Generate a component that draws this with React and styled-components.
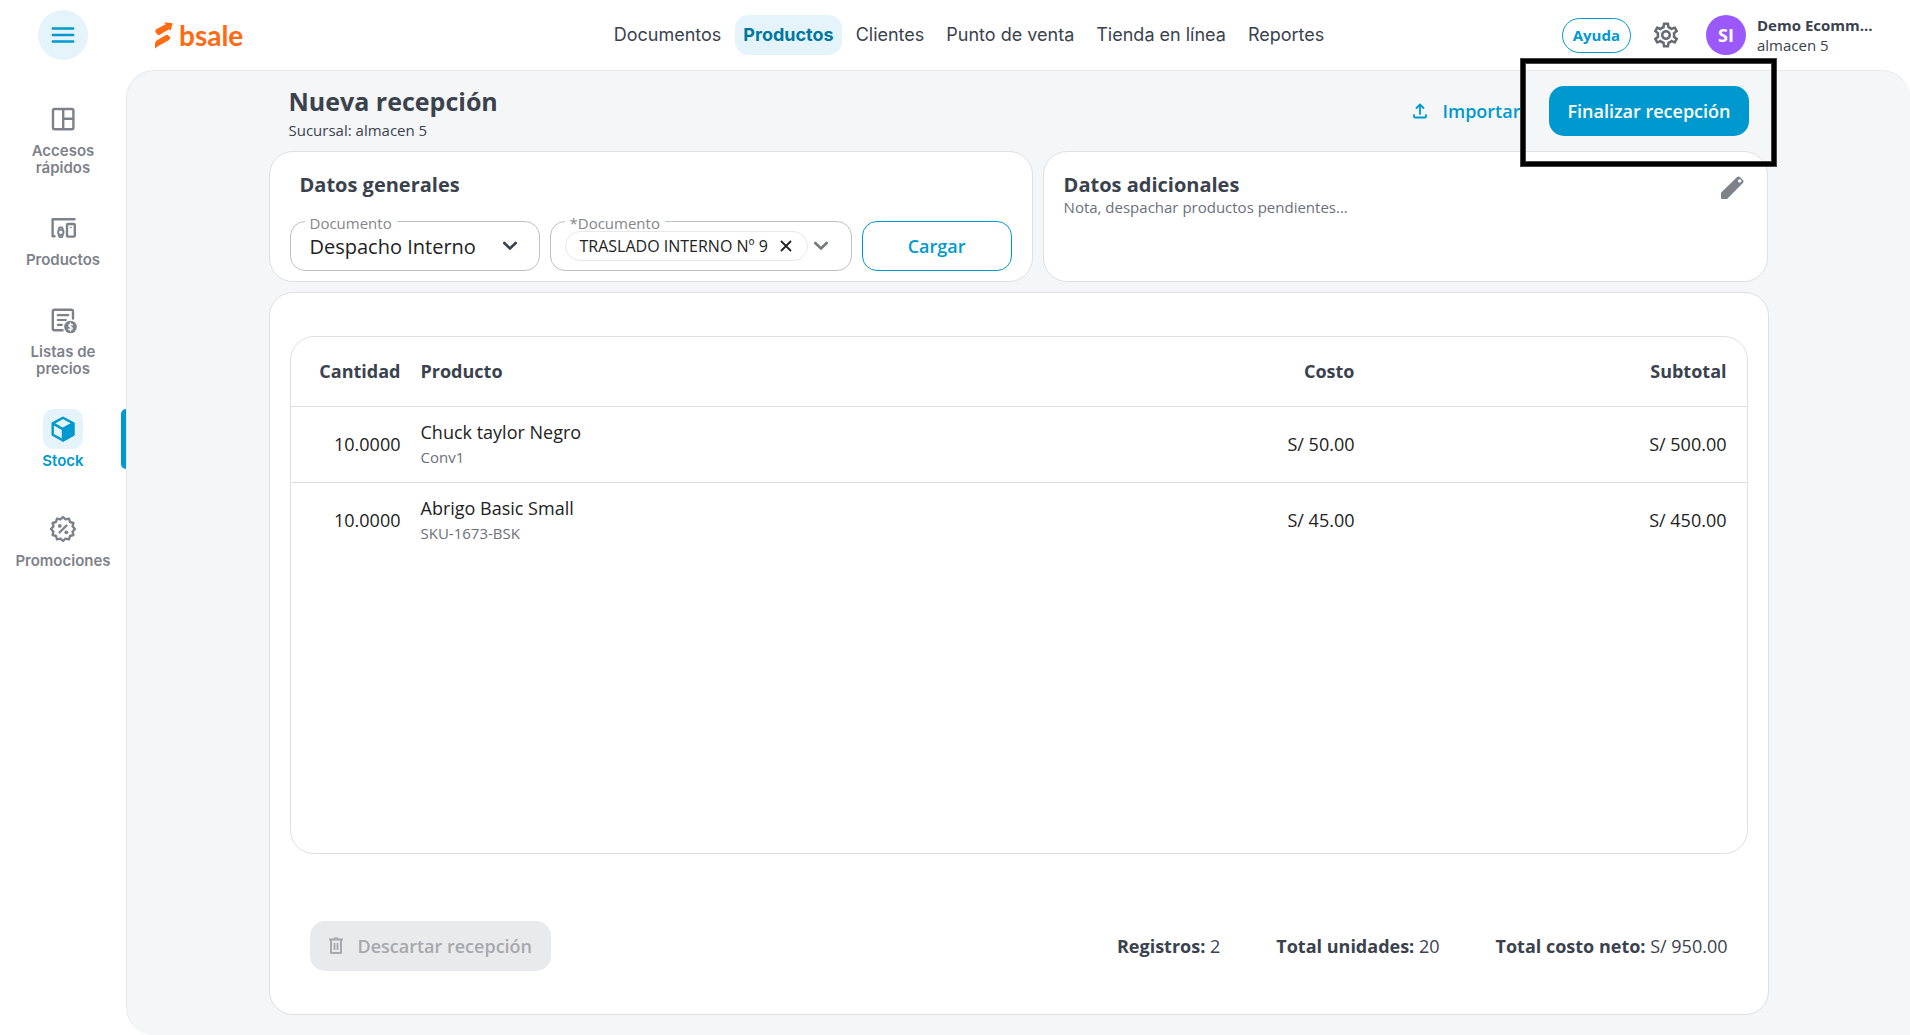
import React from 'react';
import styled, { createGlobalStyle, css } from 'styled-components';
import { MdOutlineSettings } from 'react-icons/md';

const c = {
  blue: '#0099cf',
  blueDark: '#00779f',
  blueSoft: '#e5f4fa',
  ink: '#3a424e',
  text: '#222222',
  muted: '#6b717b',
  grey: '#7d828a',
  line: '#dfe0e2',
  page: '#f5f6f8',
};

const GlobalStyle = createGlobalStyle`
  *, *::before, *::after { box-sizing: border-box; }
  body {
    margin: 0;
    background: #fff;
    color: ${c.ink};
    font-family: 'Open Sans', 'Noto Sans', sans-serif;
    font-size: 18px;
  }
  button, select, input { font: inherit; color: inherit; }
  button { cursor: pointer; }
  h1, h2, p { margin: 0; }
`;

const Shell = styled.div`
  display: flex;
  flex-direction: column;
  min-height: 100vh;
`;

const Header = styled.header`
  display: grid;
  grid-template-columns: 1fr auto 1fr;
  align-items: center;
  height: 70px;
  padding: 0 10px 0 38px;
`;

const HeaderStart = styled.div`
  display: flex;
  align-items: center;
  gap: 67px;
`;

const HeaderEnd = styled.div`
  display: flex;
  align-items: center;
  justify-content: flex-end;
`;

const MenuButton = styled.button`
  display: grid;
  place-items: center;
  width: 50px;
  height: 50px;
  padding: 0;
  border: 0;
  border-radius: 50%;
  background: ${c.blueSoft};
  color: ${c.blue};
`;

const Brand = styled.a`
  display: flex;
  align-items: center;
  gap: 6px;
  color: #ff6a13;
  font: 700 28px/36px Lato, 'Open Sans', sans-serif;
  text-decoration: none;
`;

const TopNav = styled.nav`
  display: flex;
  gap: 6px;
`;

const TopLink = styled.a`
  padding: 0 8px;
  border-radius: 14px;
  color: ${c.ink};
  font: 400 18px/40px Inter, sans-serif;
  text-decoration: none;
  ${(p) =>
    p.$active &&
    css`
      background: ${c.blueSoft};
      color: ${c.blueDark};
      font-weight: 700;
    `}
`;

const HelpButton = styled.button`
  height: 35px;
  padding: 0 10px;
  border: 1px solid ${c.blue};
  border-radius: 18px;
  background: #fff;
  color: ${c.blue};
  font-size: 15px;
  font-weight: 700;
`;

const IconButton = styled.button`
  display: grid;
  place-items: center;
  width: 30px;
  height: 30px;
  padding: 0;
  border: 0;
  background: none;
  color: ${(p) => p.$color || c.grey};
`;

const GearButton = styled(IconButton)`
  margin: 0 25px 0 20px;
`;

const Account = styled.div`
  display: flex;
  align-items: center;
  gap: 11px;
  width: 194px;
`;

const Avatar = styled.span`
  display: grid;
  place-items: center;
  width: 40px;
  height: 40px;
  border-radius: 50%;
  background: #9b59fb;
  color: #fff;
  font-size: 18px;
  font-weight: 700;
`;

const AccountText = styled.div`
  font-size: 15px;
  line-height: 20px;
`;

const Body = styled.div`
  display: flex;
  flex: 1;
`;

const Sidebar = styled.nav`
  display: flex;
  flex-direction: column;
  gap: 32px;
  width: 126px;
  padding-top: 29px;
`;

const SideIcon = styled.span`
  display: grid;
  place-items: center;
  width: 40px;
  height: 40px;
  border-radius: 10px;
`;

const SideLink = styled.a`
  display: flex;
  flex-direction: column;
  align-items: center;
  gap: 3px;
  color: ${c.grey};
  font: 600 15px/17px Inter, sans-serif;
  text-align: center;
  text-decoration: none;
  ${(p) =>
    p.$active &&
    css`
      position: relative;
      margin-bottom: 8px;
      color: ${c.blue};
      ${SideIcon} {
        background: ${c.blueSoft};
      }
      &::after {
        content: '';
        position: absolute;
        top: 0;
        right: 0;
        width: 5px;
        height: 60px;
        border-radius: 5px 0 0 5px;
        background: ${c.blue};
      }
    `}
`;

const SideLabel = styled.span`
  max-width: 100px;
`;

const Main = styled.main`
  display: flex;
  flex: 1;
  justify-content: center;
  padding-bottom: 20px;
  border: solid #e6e8ea;
  border-width: 1px 0 0 1px;
  border-radius: 28px 28px 0 28px;
  background: ${c.page};
`;

const Content = styled.div`
  display: flex;
  flex-direction: column;
  flex: 1;
  max-width: 1500px;
`;

const PageHead = styled.div`
  display: flex;
  justify-content: space-between;
  align-items: flex-start;
  height: 80px;
  padding: 13px 20px 0;
`;

const Title = styled.h1`
  margin-bottom: 2px;
  font-size: 25px;
  line-height: 34px;
`;

const Subtitle = styled.p`
  font-size: 15px;
  line-height: 20px;
  color: ${(p) => p.$color || c.ink};
`;

const Actions = styled.div`
  display: flex;
  gap: 10px;
  padding-top: 2px;
`;

const Button = styled.button`
  display: flex;
  align-items: center;
  justify-content: center;
  gap: 15px;
  height: 50px;
  padding: 0 18px;
  border: 1px solid transparent;
  border-radius: 15px;
  background: none;
  color: ${c.blue};
  font-size: 18px;
  font-weight: 600;
  white-space: nowrap;
  ${(p) => p.$kind === 'solid' && css`padding: 0 17px; background: ${c.blue}; color: #fff;`}
  ${(p) => p.$kind === 'outline' && css`width: 150px; border-color: ${c.blue};`}
  &:disabled {
    background: #e9eaec;
    color: #a6a8ad;
    cursor: default;
  }
`;

const Highlight = styled.div`
  position: relative;
  height: 50px;
  &::after {
    content: '';
    position: absolute;
    inset: -27px -27px -30px -28px;
    border: 4px solid #000;
    box-shadow: 0 0 0 1px #444, inset 0 0 0 1px #444;
    pointer-events: none;
  }
`;

const Cards = styled.div`
  display: grid;
  grid-template-columns: minmax(0, 20fr) minmax(0, 19fr);
  gap: 10px;
  margin-bottom: 10px;
`;

const Card = styled.section`
  border: 1px solid ${c.line};
  border-radius: 24px;
  background: #fff;
`;

const GeneralCard = styled(Card)`
  padding: 21px 20px 10px;
`;

const ExtraCard = styled(Card)`
  display: flex;
  justify-content: space-between;
  padding: 21px 20px;
`;

const CardTitle = styled.h2`
  padding-left: ${(p) => (p.$inset ? 10 : 0)}px;
  font-size: 20px;
  line-height: 24px;
`;

const Fields = styled.div`
  display: grid;
  grid-template-columns: 250px 1fr auto;
  gap: 10px;
  margin-top: 24px;
`;

const Field = styled.div`
  position: relative;
  display: flex;
  align-items: center;
  height: 50px;
  border: 1px solid #bfc0c2;
  border-radius: 15px;
`;

const FieldLabel = styled.label`
  position: absolute;
  top: -9px;
  left: 14px;
  padding: 0 5px;
  background: #fff;
  color: #84868a;
  font-size: 15px;
  line-height: 20px;
  height: 18px;
`;

const Select = styled.select`
  width: 100%;
  height: 48px;
  padding: 0 50px 0 19px;
  border: 0;
  border-radius: 15px;
  background: none;
  appearance: none;
  color: ${c.text};
  font-size: 20px;
`;

const SelectArrow = styled.span`
  position: absolute;
  right: 17px;
  display: grid;
  place-items: center;
  width: 24px;
  height: 24px;
  color: ${c.ink};
  pointer-events: none;
`;

const Combo = styled(Field)`
  padding: 0 18px 0 14px;
`;

const ComboInput = styled.input`
  flex: 1;
  width: 0;
  min-width: 0;
  padding: 0;
  border: 0;
  outline: 0;
  background: none;
`;

const Chip = styled.span`
  display: flex;
  align-items: center;
  gap: 6px;
  height: 30px;
  padding: 0 9px 0 14px;
  border: 1px solid #e8e8ea;
  border-radius: 15px;
  color: ${c.text};
  font-size: 16px;
  white-space: nowrap;
`;

const SmallIconButton = styled(IconButton)`
  width: 24px;
  height: 24px;
`;

const MainCard = styled(Card)`
  display: flex;
  flex: 1;
  flex-direction: column;
  padding: 43px 20px;
`;

const TableBox = styled.div`
  flex: 1;
  border: 1px solid ${c.line};
  border-radius: 24px;
`;

const Table = styled.table`
  width: 100%;
  border-collapse: collapse;
  table-layout: fixed;
`;

const Row = styled.tr`
  height: ${(p) => (p.$head ? 69 : 76)}px;
  & + & , tbody > & {
    border-top: 1px solid ${c.line};
  }
`;

const Col = styled.col`
  width: ${(p) => p.$w};
`;

const HeadCell = styled.th`
  padding: 0 10px;
  text-align: ${(p) => p.$align || 'right'};
  font-weight: 700;
  &:last-child { padding-right: 20px; }
`;

const Cell = styled.td`
  padding: 0 10px;
  text-align: ${(p) => p.$align || 'right'};
  color: ${c.text};
  line-height: 26px;
  &:last-child { padding-right: 20px; }
`;

const Sku = styled.div`
  color: ${c.muted};
  font-size: 15px;
  line-height: 24px;
`;

const Footer = styled.footer`
  display: flex;
  align-items: center;
  justify-content: space-between;
  margin-top: 67px;
  padding: 0 20px;
`;

const Totals = styled.div`
  display: flex;
  gap: 56px;
`;

const MenuIcon = () => (
  <svg width="24" height="18" viewBox="0 0 24 18" stroke="currentColor" strokeWidth="2.4" strokeLinecap="round">
    <path d="M1.8 2.5h20.4M1.8 9h20.4M1.8 15.5h20.4" />
  </svg>
);

const LogoMark = () => (
  <svg width="18" height="27" viewBox="464 65 54 81" fill="currentColor">
    <path d="M492 66l25 3-6 22-5-4-29 17q-3 1-5-1l-7-7v-4q0-4 4-6l27-14z" />
    <path d="M497 104q3-2 5 0l8 7q0 6-5 9l-27 15q-8 4-14 10v-15q0-6 6-10z" />
  </svg>
);

const QuickIcon = () => (
  <svg width="30" height="30" viewBox="0 0 30 30" fill="none" stroke="currentColor" strokeWidth="2.4" strokeLinejoin="round">
    <rect x="5" y="5" width="20.4" height="20.2" rx="1.5" />
    <path d="M15.2 5v20M15.2 14.8h10" />
  </svg>
);

const DevicesIcon = () => (
  <svg width="30" height="30" viewBox="0 0 30 30" fill="none" stroke="currentColor" strokeWidth="2.4" strokeLinecap="round" strokeLinejoin="round">
    <path d="M26.5 6.2H4.6v17h1.9" />
    <rect x="19" y="11" width="7.8" height="12.6" rx="1" />
    <path d="M22.9 14.2v.2" strokeWidth="1.6" />
    <circle cx="12.8" cy="19.2" r="2.7" strokeWidth="2" />
    <path d="M10.8 16.2l.6-1.9h2.8l.6 1.9M10.8 22.2l.6 1.9h2.8l.6-1.9" strokeWidth="1.8" />
  </svg>
);

const PriceListIcon = () => (
  <svg width="30" height="30" viewBox="0 0 30 30" fill="none" stroke="currentColor" strokeWidth="2.4" strokeLinecap="round" strokeLinejoin="round">
    <path d="M25 13.5V6.500Q25 4.800 23.300 4.800H6.500Q4.800 4.800 4.800 6.500V23.500Q4.800 25.200 6.500 25.200H14.500" />
    <path d="M9.800 10.200h10.400M9.800 15h8M9.800 19.800h4" strokeWidth="2.200" />
    <circle cx="22.500" cy="22" r="6.300" fill="currentColor" stroke="none" />
    <path d="M24.500 19.900Q22.500 18.600 21.200 19.700Q20.200 21.400 22.500 22Q25 22.700 23.900 24.200Q22.500 25.400 20.600 24.100M22.500 18v8" stroke="#fff" strokeWidth="1.300" />
  </svg>
);

const CubeIcon = () => (
  <svg width="30" height="30" viewBox="0 0 30 30" fill="none" stroke="currentColor" strokeWidth="2.4" strokeLinejoin="round">
    <path d="M15 3.700L25.300 9.400V20.700L15 26.400L4.700 20.700V9.400Z" />
    <path d="M4.700 9.400L15 15.100L25.300 9.400" />
    <path d="M15 15.100L25.300 9.400V20.700L15 26.400Z" fill="currentColor" />
  </svg>
);

const PromoIcon = () => {
  const points = Array.from({ length: 24 }, (_, i) => {
    const r = i % 2 ? 9.9 : 12;
    const a = (i * Math.PI) / 12;
    return `${(15 + r * Math.cos(a)).toFixed(2)},${(15 + r * Math.sin(a)).toFixed(2)}`;
  }).join(' ');
  return (
    <svg width="30" height="30" viewBox="0 0 30 30" fill="none" stroke="currentColor" strokeWidth="2.4" strokeLinejoin="round" strokeLinecap="round">
      <polygon points={points} />
      <path d="M11.500 18.500l7-7" />
      <circle cx="11.800" cy="11.900" r="1.900" fill="currentColor" stroke="none" />
      <circle cx="18.300" cy="18.300" r="1.900" fill="currentColor" stroke="none" />
    </svg>
  );
};

const UploadIcon = () => (
  <svg width="14" height="16" viewBox="0 0 14 16" fill="none" stroke="currentColor" strokeWidth="1.8" strokeLinecap="round" strokeLinejoin="round">
    <path d="M7 11V2M3.500 5L7 1.500L10.500 5M1 12v1.500Q1 14.500 2 14.500H12Q13 14.500 13 13.500V12" />
  </svg>
);

const TrashIcon = () => (
  <svg width="14" height="18" viewBox="0 0 14 18" fill="none" stroke="currentColor" strokeWidth="2" strokeLinejoin="round">
    <path d="M0 2.500H14M4.500 1.500h5M2 3v12.500Q2 16 2.500 16h9Q12 16 12 15.500V3" />
    <path d="M5.500 6v7M8.500 6v7" strokeWidth="1.800" />
  </svg>
);

const PencilIcon = () => (
  <svg width="24" height="24" viewBox="0 0 24 24" fill="currentColor">
    <path fillRule="evenodd" d="M1 17.500Q1 16.800 1.500 16.300L16.800 1.200Q18.400-.2 20 1.200L22.900 4.100Q24.200 5.600 22.900 7.100L7.600 22.400Q7.100 23 6.400 23H2Q1 23 1 22ZM19.700 3.200a1.700 1.700 0 1 0 .01 0Z" />
  </svg>
);

const Chevron = () => (
  <svg width="16" height="10" viewBox="0 0 16 10" fill="none" stroke="currentColor" strokeWidth="2.600" strokeLinecap="round">
    <path d="M2.300 2L8 7.500L13.700 2" />
  </svg>
);

const CloseIcon = () => (
  <svg width="12" height="12" viewBox="0 0 12 12" fill="none" stroke="currentColor" strokeWidth="1.800">
    <path d="M1 1l10 10M11 1L1 11" />
  </svg>
);

const topLinks = ['Documentos', 'Productos', 'Clientes', 'Punto de venta', 'Tienda en línea', 'Reportes'];

const sideLinks = [
  { label: 'Accesos rápidos', icon: QuickIcon },
  { label: 'Productos', icon: DevicesIcon },
  { label: 'Listas de precios', icon: PriceListIcon },
  { label: 'Stock', icon: CubeIcon, active: true },
  { label: 'Promociones', icon: PromoIcon },
];

const items = [
  { qty: '10.0000', name: 'Chuck taylor Negro', sku: 'Conv1', cost: 'S/ 50.00', subtotal: 'S/ 500.00' },
  { qty: '10.0000', name: 'Abrigo Basic Small', sku: 'SKU-1673-BSK', cost: 'S/ 45.00', subtotal: 'S/ 450.00' },
];

export default function App() {
  return (
    <Shell>
      <GlobalStyle />
      <Header>
        <HeaderStart>
          <MenuButton aria-label="Menú">
            <MenuIcon />
          </MenuButton>
          <Brand href="#">
            <LogoMark />
            bsale
          </Brand>
        </HeaderStart>
        <TopNav>
          {topLinks.map((label) => (
            <TopLink key={label} href="#" $active={label === 'Productos'}>
              {label}
            </TopLink>
          ))}
        </TopNav>
        <HeaderEnd>
          <HelpButton>Ayuda</HelpButton>
          <GearButton aria-label="Configuración" $color="#666b73">
            <MdOutlineSettings size={30} />
          </GearButton>
          <Account>
            <Avatar>SI</Avatar>
            <AccountText>
              <strong>Demo Ecomm...</strong>
              <div>almacen 5</div>
            </AccountText>
          </Account>
        </HeaderEnd>
      </Header>
      <Body>
        <Sidebar>
          {sideLinks.map(({ label, icon: Icon, active }) => (
            <SideLink key={label} href="#" $active={active}>
              <SideIcon>
                <Icon />
              </SideIcon>
              <SideLabel>{label}</SideLabel>
            </SideLink>
          ))}
        </Sidebar>
        <Main>
          <Content>
            <PageHead>
              <div>
                <Title>Nueva recepción</Title>
                <Subtitle>Sucursal: almacen 5</Subtitle>
              </div>
              <Actions>
                <Button>
                  <UploadIcon />
                  Importar
                </Button>
                <Highlight>
                  <Button $kind="solid">Finalizar recepción</Button>
                </Highlight>
              </Actions>
            </PageHead>
            <Cards>
              <GeneralCard>
                <CardTitle $inset>Datos generales</CardTitle>
                <Fields>
                  <Field>
                    <FieldLabel htmlFor="doc-type">Documento</FieldLabel>
                    <Select id="doc-type" defaultValue="Despacho Interno">
                      <option>Despacho Interno</option>
                    </Select>
                    <SelectArrow>
                      <Chevron />
                    </SelectArrow>
                  </Field>
                  <Combo>
                    <FieldLabel htmlFor="doc">*Documento</FieldLabel>
                    <Chip>
                      TRASLADO INTERNO Nº 9
                      <SmallIconButton aria-label="Quitar" $color={c.text}>
                        <CloseIcon />
                      </SmallIconButton>
                    </Chip>
                    <ComboInput id="doc" role="combobox" aria-expanded="false" />
                    <SmallIconButton aria-label="Abrir" $color="#77797d">
                      <Chevron />
                    </SmallIconButton>
                  </Combo>
                  <Button $kind="outline">Cargar</Button>
                </Fields>
              </GeneralCard>
              <ExtraCard>
                <div>
                  <CardTitle>Datos adicionales</CardTitle>
                  <Subtitle $color={c.muted}>Nota, despachar productos pendientes...</Subtitle>
                </div>
                <IconButton aria-label="Editar">
                  <PencilIcon />
                </IconButton>
              </ExtraCard>
            </Cards>
            <MainCard>
              <TableBox>
                <Table>
                  <colgroup>
                    <Col $w="120px" />
                    <Col />
                    <Col $w="20%" />
                    <Col $w="382px" />
                  </colgroup>
                  <thead>
                    <Row $head>
                      <HeadCell>Cantidad</HeadCell>
                      <HeadCell $align="left">Producto</HeadCell>
                      <HeadCell>Costo</HeadCell>
                      <HeadCell>Subtotal</HeadCell>
                    </Row>
                  </thead>
                  <tbody>
                    {items.map((item) => (
                      <Row key={item.name}>
                        <Cell>{item.qty}</Cell>
                        <Cell $align="left">
                          {item.name}
                          <Sku>{item.sku}</Sku>
                        </Cell>
                        <Cell>{item.cost}</Cell>
                        <Cell>{item.subtotal}</Cell>
                      </Row>
                    ))}
                  </tbody>
                </Table>
              </TableBox>
              <Footer>
                <Button disabled>
                  <TrashIcon />
                  Descartar recepción
                </Button>
                <Totals>
                  <span><strong>Registros:</strong> 2</span>
                  <span><strong>Total unidades:</strong> 20</span>
                  <span><strong>Total costo neto:</strong> S/ 950.00</span>
                </Totals>
              </Footer>
            </MainCard>
          </Content>
        </Main>
      </Body>
    </Shell>
  );
}
